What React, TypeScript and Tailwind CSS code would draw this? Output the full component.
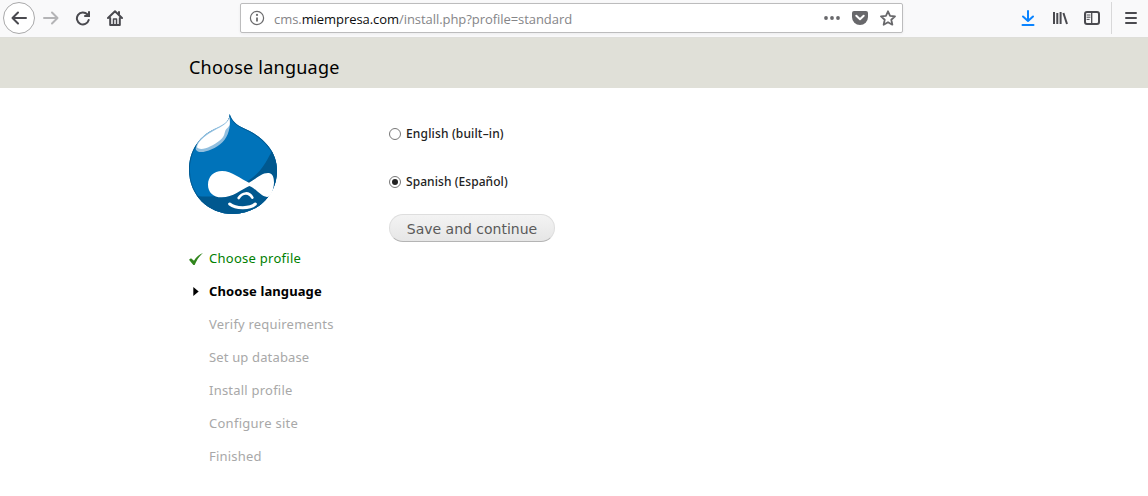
import type { ReactNode } from "react";

function BrowserIcon({ children, className = "" }: { children: ReactNode; className?: string }) {
  return (
    <svg
      viewBox="0 0 16 16"
      className={`block h-4 w-4 shrink-0 ${className}`}
      fill="none"
      stroke="currentColor"
      strokeWidth="2"
      strokeLinecap="round"
      strokeLinejoin="round"
    >
      {children}
    </svg>
  );
}

function Toolbar() {
  return (
    <header className="flex h-[38px] items-start border-b border-[#deded9] bg-[#f9f9fa] text-[#4a4a4f]">
      <div className="ml-[3px] mt-[2px] flex h-8 w-8 items-center justify-center rounded-full border border-[#a9a9aa] bg-white">
        <BrowserIcon>
          <path d="M15 8H1.5M7 2.5 1.5 8 7 13.5" />
        </BrowserIcon>
      </div>
      <BrowserIcon className="ml-2 mt-[10px] text-[#b4b4b6]">
        <path d="M1 8h13.5M9 2.5 14.500 8 9 13.5" />
      </BrowserIcon>
      <BrowserIcon className="ml-4 mt-[10px]">
        <path d="M12.300 4.300A6 6 0 1 0 13.700 10" />
        <path d="M15 1.500v5.500H9.500z" fill="currentColor" stroke="none" />
        <path d="M14 2v4h-4" />
      </BrowserIcon>
      <BrowserIcon className="ml-4 mt-[10px]">
        <path d="M1 8 8 1.300 15 8M3.200 8v7h9.600V8" />
        <path d="M6.500 14V9h3v5" strokeWidth="1.500" />
        <path d="M12 2v2" />
      </BrowserIcon>

      <div className="ml-[117px] mt-[3px] flex h-[30px] w-[663px] items-center rounded-[2px] border border-[#bcbcbd] bg-white pl-2 shadow-[0_1px_3px_rgba(0,0,0,0.06)]">
        <BrowserIcon className="text-[#6b6b6d]">
          <circle cx="8" cy="8" r="6.600" strokeWidth="1.200" />
          <path d="M8 7.500v4" strokeLinecap="butt" strokeWidth="1.800" />
          <circle cx="8" cy="4.900" r="1.100" fill="currentColor" stroke="none" />
        </BrowserIcon>
        <span className="ml-[9px] mt-[2px] w-[320px] whitespace-nowrap font-['Open_Sans',sans-serif] text-[13px] leading-[18px] tracking-[-0.06px] text-[#858588]">
          cms.<span className="text-[#0c0c0d]">miempresa.com</span>/install.php?profile=standard
        </span>
        <div className="ml-auto mr-[6px] flex items-center gap-3 text-[#68686b]">
          <BrowserIcon>
            <g fill="currentColor" stroke="none">
              <circle cx="2" cy="8" r="1.900" />
              <circle cx="8" cy="8" r="1.900" />
              <circle cx="14" cy="8" r="1.900" />
            </g>
          </BrowserIcon>
          <BrowserIcon>
            <path d="M2 1h12a2 2 0 0 1 2 2v4A8 8 0 0 1 0 7V3a2 2 0 0 1 2-2z" fill="currentColor" stroke="none" />
            <path d="M4.300 5.800 8 9.300 11.700 5.800" stroke="white" />
          </BrowserIcon>
          <BrowserIcon>
            <path d="m8 1.300 2.050 4.550 4.950.55-3.700 3.350 1.050 4.950L8 12.200 3.650 14.700 4.700 9.750 1 6.400l4.950-.55z" strokeWidth="1.800" />
          </BrowserIcon>
        </div>
      </div>

      <BrowserIcon className="ml-[117px] mt-[10px] text-[#0a84ff]">
        <path d="M8 1v9.500M3 6.500l5 4.500 5-4.500M2.500 15h11" />
      </BrowserIcon>
      <BrowserIcon className="ml-4 mt-[10px]">
        <path d="M2 2v12M5.300 3v11M8.600 2v12M11.400 3 15 14" strokeLinecap="butt" />
      </BrowserIcon>
      <BrowserIcon className="ml-4 mt-[10px]">
        <rect x="1" y="2" width="14" height="12" rx="2" />
        <path d="M7.700 2v12" strokeWidth="1.300" />
        <path d="M3 5h3M3 7.200h3M3 9.400h2.200" strokeWidth="1" />
      </BrowserIcon>
      <div className="ml-[11px] mt-[2px] h-8 w-px bg-[#d8d8d9]" />
      <BrowserIcon className="ml-[11px] mt-[10px]">
        <path d="M3 3h10M3 8h10M3 13h10" />
      </BrowserIcon>
    </header>
  );
}

function Logo() {
  return (
    <svg viewBox="27 27 264 300" className="block h-[100px] w-[88px]">
      <defs>
        <clipPath id="drop">
          <path d="M149 27C155 46 169 60 190 69C235 88 291 129 291 196C291 272 232 327 159 327C85 327 27 270 27 195C27 137 57 98 93 78C119 64 146 62 149 27Z" />
        </clipPath>
      </defs>
      <g clipPath="url(#drop)">
        <path d="M27 27h264v300H27z" fill="#0073ba" />
        <path d="M291 120C267 143 262 178 226 211C196 237 172 243 161 254C126 277 75 278 27 270V327H291Z" fill="#00588f" />
        <path d="M149 27C155 46 169 60 190 69C235 88 291 129 291 196C291 272 232 327 159 327C85 327 27 270 27 195C27 137 57 98 93 78C119 64 146 62 149 27Z" fill="none" stroke="#00588f" strokeWidth="5" />
      </g>
      <path d="M149 34C142 58 116 64 93 77C69 90 50 109 47 132C51 151 99 139 128 111C145 94 153 67 149 34Z" fill="#91bfdf" />
      <path d="M148 40C139 61 117 68 96 80C71 94 52 112 51 127C62 140 97 125 121 105C139 91 130 77 143 68C151 62 150 54 148 40Z" fill="white" />
      <path d="M126 198C156 198 181 222 207 233C228 223 244 202 267 204C278 206 282 217 282 233C281 253 274 276 261 276C242 275 227 249 208 243C184 253 159 277 125 277C99 277 84 261 84 239C84 215 101 198 126 198Z" fill="white" />
      <path d="M176 279C187 262 207 260 217 278" fill="none" stroke="white" strokeWidth="8" strokeLinecap="round" />
      <path d="M149 297C169 313 210 311 226 297" fill="none" stroke="white" strokeWidth="9" strokeLinecap="round" />
    </svg>
  );
}

const steps = [
  { label: "Verify requirements", tracking: "tracking-[0.2px]" },
  { label: "Set up database", tracking: "tracking-[0.15px]" },
  { label: "Install profile", tracking: "tracking-[0.22px]" },
  { label: "Configure site", tracking: "tracking-[0.27px]" },
  { label: "Finished", tracking: "tracking-[0.2px]" },
];

function Sidebar() {
  return (
    <aside className="w-[200px] shrink-0 pt-[26px]">
      <Logo />
      <ol className="mt-7 text-[13px] leading-[33px] text-[#a8a8a8]">
        <li className="flex h-[33px] items-center text-[#008000]">
          <svg viewBox="0 0 42 36" className="mr-[6px] h-3 w-[14px]">
            <path d="M0 20 6 16 15 23C22 12 31 4 42 0C30 10 23 22 17 36H13Z" fill="#30851c" />
          </svg>
          <span className="tracking-[0.27px]">Choose profile</span>
        </li>
        <li className="flex h-[33px] items-center font-bold text-black">
          <svg viewBox="0 0 6 10" className="ml-1 mr-[10px] h-[9px] w-[6px]">
            <path d="M0 0 6 5 0 10z" />
          </svg>
          <span className="tracking-[0.1px]">Choose language</span>
        </li>
        {steps.map((step) => (
          <li key={step.label} className={`h-[33px] pl-5 ${step.tracking}`}>
            {step.label}
          </li>
        ))}
      </ol>
    </aside>
  );
}

function LanguageOption({ label, tracking, checked = false }: { label: string; tracking: string; checked?: boolean }) {
  return (
    <label className="flex h-12 items-center text-[12px] leading-4 text-[#222]">
      <input type="radio" name="language" defaultChecked={checked} className="peer sr-only" />
      <span className="mr-[5px] flex h-3 w-3 items-center justify-center rounded-full border border-[#777] bg-white">
        {checked && <span className="h-[6px] w-[6px] rounded-full bg-[#222]" />}
      </span>
      <span className={`font-medium ${tracking}`}>{label}</span>
    </label>
  );
}

export default function App() {
  return (
    <div className="h-[496px] overflow-hidden bg-white font-['Noto_Sans',sans-serif]">
      <Toolbar />
      <div className="h-[50px] bg-[#e0e0d8] pl-[189px] pt-[16px]">
        <h1 className="text-[18px] leading-[26px] tracking-[0.23px] text-black">Choose language</h1>
      </div>
      <main className="flex pl-[189px]">
        <Sidebar />
        <form className="pt-[22px]">
          <LanguageOption label="English (built–in)" tracking="tracking-[0.16px]" />
          <LanguageOption label="Spanish (Español)" tracking="tracking-[0.07px]" checked />
          <button
            type="button"
            className="mt-2 h-7 w-[166px] whitespace-nowrap rounded-full border border-[#dedede] border-b-[#b4b4b4] bg-linear-to-b from-[#f3f3f3] to-[#e6e6e6] pt-[2px] font-['DejaVu_Sans',sans-serif] text-[14px] leading-6 text-[#5a5a5a]"
          >
            Save and continue
          </button>
        </form>
      </main>
    </div>
  );
}
